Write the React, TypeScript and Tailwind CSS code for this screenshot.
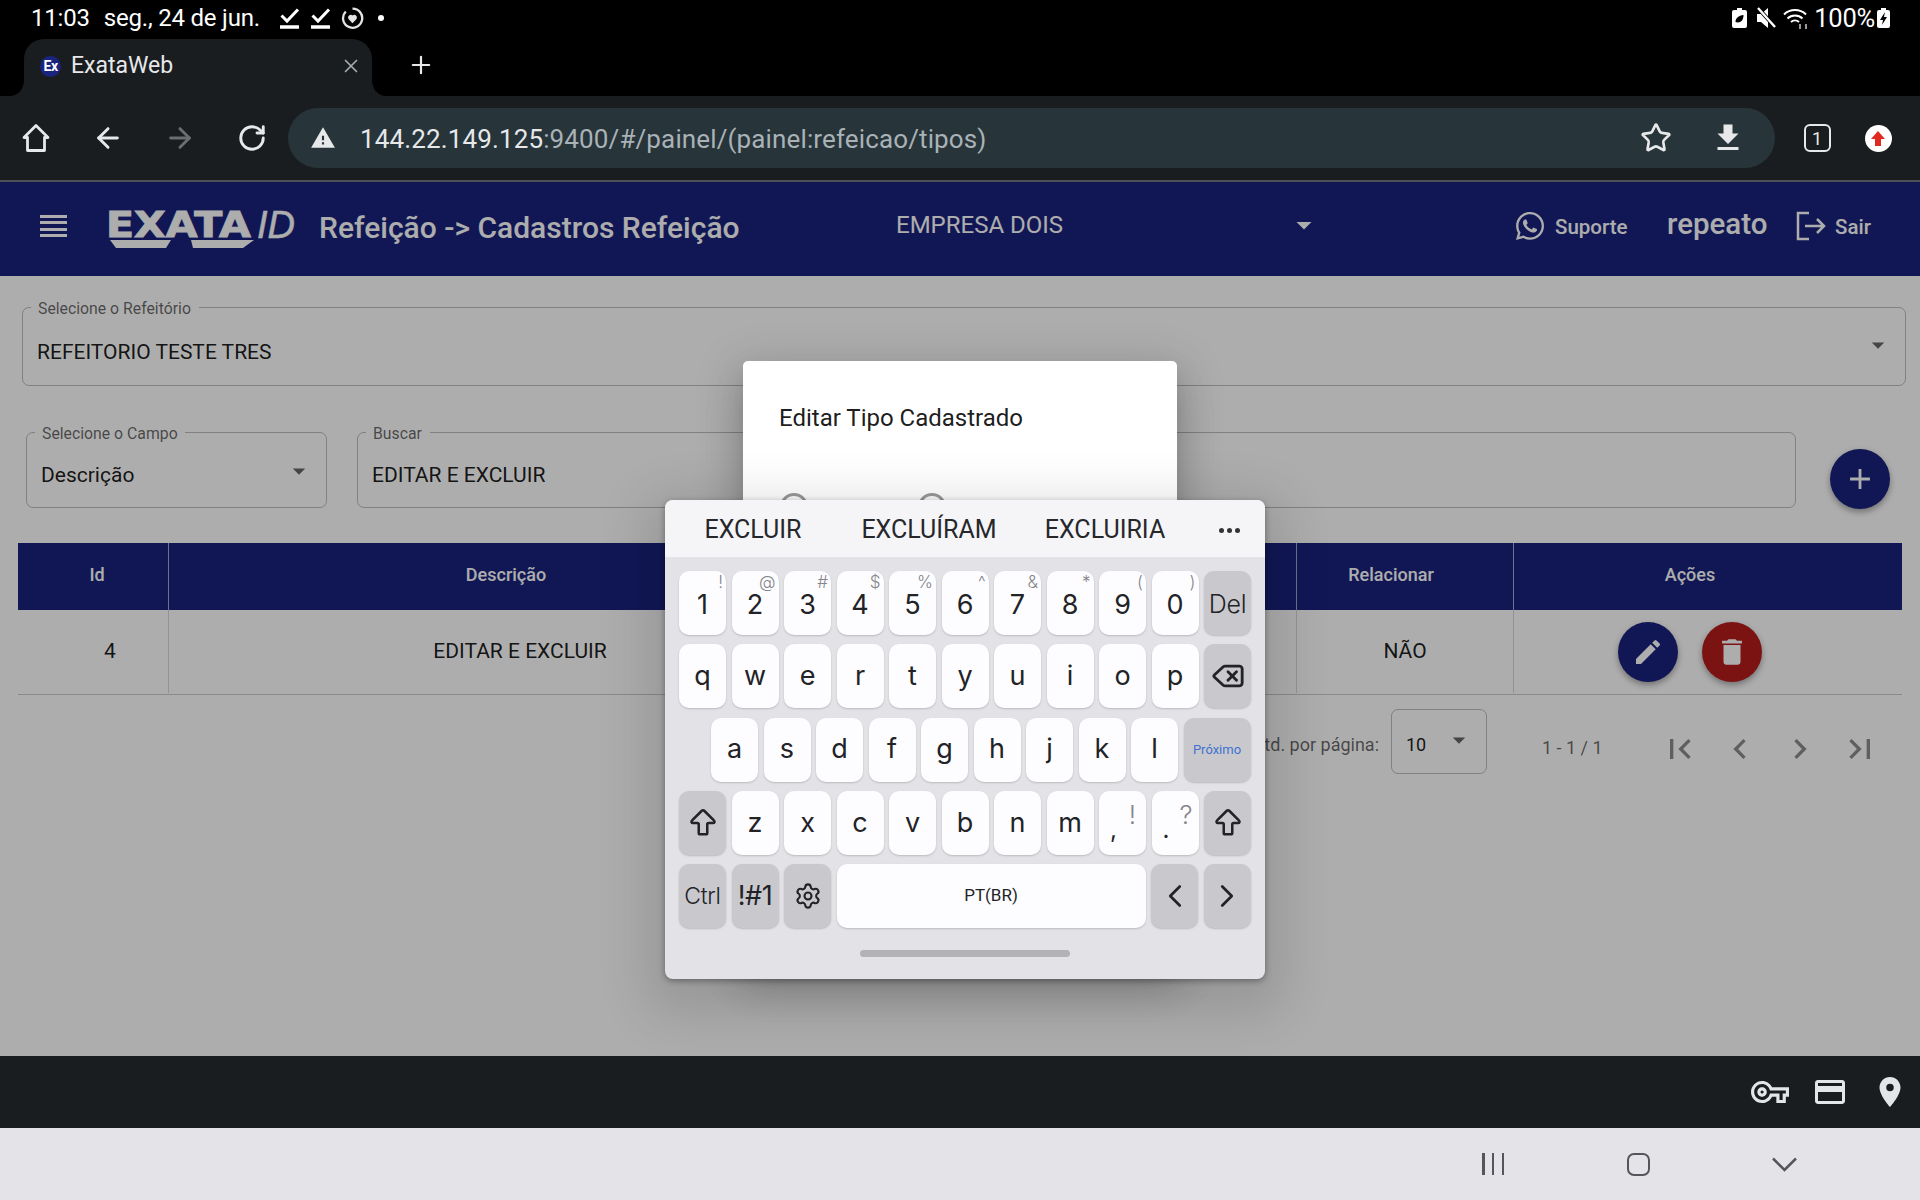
import { ArrowBigUp, ArrowLeft, ArrowRight, ChevronLeft, ChevronRight, Delete, RotateCw, Settings, Star, X, Plus } from "lucide-react";
import { FaWhatsapp } from "react-icons/fa";
import {
  MdAdd,
  MdArrowDropDown,
  MdChevronLeft,
  MdChevronRight,
  MdCreditCard,
  MdDelete,
  MdEdit,
  MdFileDownload,
  MdFirstPage,
  MdLastPage,
  MdLocationOn,
  MdOutlineVpnKey,
  MdWarning,
} from "react-icons/md";

const CheckNotif = () => (
  <svg width="22" height="24" viewBox="0 0 22 24" fill="none" stroke="#fff">
    <path d="M2.5 9.5 8 15 19 3.5" strokeWidth="3" />
    <path d="M1 21h19" strokeWidth="3.5" />
  </svg>
);

const StatusBar = () => (
  <div className="h-[39px] flex items-center pl-[31px] pr-[30px] pb-[3px] text-white text-[24px] tracking-[-0.2px]">
    <span>11:03</span>
    <span className="ml-[14px]">seg., 24 de jun.</span>
    <div className="ml-[19px] flex items-center gap-[9px]">
      <CheckNotif />
      <CheckNotif />
      <svg width="23" height="24" viewBox="0 0 24 24" fill="none" stroke="#e5e5e5">
        <path d="M12 2.2a10 10 0 1 1-7 3" strokeWidth="2.4" />
        <path d="M12 17.5 7.8 13a2.8 2.8 0 0 1 4.2-3.6A2.8 2.8 0 0 1 16.2 13Z" fill="#e5e5e5" stroke="none" />
      </svg>
      <div className="w-[6px] h-[6px] rounded-full bg-white ml-[5px]" />
    </div>
    <div className="ml-auto flex items-center">
      <svg width="15" height="20" viewBox="0 0 15 20">
        <path d="M5 0h5v2h3a2 2 0 0 1 2 2v14a2 2 0 0 1-2 2H2a2 2 0 0 1-2-2V4a2 2 0 0 1 2-2h3Z" fill="#fff" />
        <path d="M3.5 14c0-4 3-6.500 8-7 0 4.500-2 7.500-6 7.500Z" fill="#000" />
      </svg>
      <svg className="ml-[8px]" width="22" height="24" viewBox="0 0 22 24">
        <path d="M2 8h4l7-6v20l-7-6H2Z" fill="#fff" />
        <path d="M3 2 20 21" stroke="#000" strokeWidth="4" />
        <path d="M3 2 20 21" stroke="#fff" strokeWidth="2.400" />
      </svg>
      <svg className="ml-[6px]" width="26" height="24" viewBox="0 0 26 24" fill="none" stroke="#fff" strokeWidth="2">
        <path d="M1 8.500a16 16 0 0 1 22 0M4.500 12.500a11 11 0 0 1 15 0M8 16a6 6 0 0 1 8 0" />
        <path d="M17 23v-5M23 18v5" stroke="#999" />
      </svg>
      <span className="ml-[5px] text-[25.500px]">100%</span>
      <svg className="ml-[2px]" width="13" height="20" viewBox="0 0 13 20">
        <path d="M4 0h5v2h2a2 2 0 0 1 2 2v14a2 2 0 0 1-2 2H2a2 2 0 0 1-2-2V4a2 2 0 0 1 2-2h2Z" fill="#fff" />
        <path d="M8 4 3 12h3l-1 5 5-8H7Z" fill="#000" />
      </svg>
    </div>
  </div>
);

const TabStrip = () => (
  <div className="h-[57px] flex items-end">
    <div className="relative ml-[24px] w-[348px] h-[57px] bg-[#191d20] rounded-t-[20px] flex items-center pb-[3px]">
      <svg className="absolute left-[-14px] bottom-0" width="14" height="16" viewBox="0 0 14 16">
        <path d="M14 0v16H0C8 16 14 9 14 0Z" fill="#191d20" />
      </svg>
      <svg className="absolute right-[-14px] bottom-0" width="14" height="16" viewBox="0 0 14 16">
        <path d="M0 0v16h14C6 16 0 9 0 0Z" fill="#191d20" />
      </svg>
      <div className="ml-[16px] w-[21px] h-[21px] rounded-full bg-[#1a237e] flex items-center justify-center text-white text-[14px] font-bold tracking-[-0.5px]">
        Ex
      </div>
      <span className="ml-[10px] text-[23px] text-[#e6e8ea]">ExataWeb</span>
      <X className="ml-auto mr-[10px] text-[#a7acaf]" size={22} strokeWidth={1.8} />
    </div>
    <Plus className="ml-[35px] mb-[17px] text-[#e6e8ea]" size={28} strokeWidth={1.9} />
  </div>
);

const ToolbarButton = ({ children, className }: { children: React.ReactNode; className: string }) => (
  <div className={`h-full shrink-0 flex items-center justify-center ${className}`}>{children}</div>
);

const Toolbar = () => (
  <div className="h-[86px] shrink-0 bg-[#191d20] border-b-2 border-b-[#4e5257] flex items-center text-[#e6e8ea]">
    <ToolbarButton className="w-[72px]">
      <svg width="28" height="30" viewBox="0 0 28 30" fill="none" stroke="#e6e8ea" strokeWidth="2.800" strokeLinejoin="round">
        <path d="M14 2.500 2 14.500h3.500V27.500h17V14.500H26Z" />
      </svg>
    </ToolbarButton>
    <ToolbarButton className="w-[72px]">
      <ArrowLeft size={32} strokeWidth={2.2} />
    </ToolbarButton>
    <ToolbarButton className="w-[72px]">
      <ArrowRight className="text-[#6a6e71]" size={32} strokeWidth={2.2} />
    </ToolbarButton>
    <ToolbarButton className="w-[72px]">
      <RotateCw size={30} strokeWidth={2.3} />
    </ToolbarButton>
    <div className="w-[1487px] h-[60px] shrink-0 rounded-full bg-[#27343a] flex items-center pl-[22px] pr-[29px]">
      <MdWarning size={26} />
      <span className="ml-[24px] pt-[2px] text-[26px] whitespace-nowrap tracking-[0.13px]">
        144.22.149.125<span className="text-[#a9b2b6]">:9400/#/painel/(painel:refeicao/tipos)</span>
      </span>
      <Star className="ml-auto" size={32} strokeWidth={2} />
      <MdFileDownload className="ml-[38px]" size={36} />
    </div>
    <ToolbarButton className="w-[84px]">
      <div className="w-[27px] h-[28px] border-[2.5px] border-[#e6e8ea] rounded-[6px] flex items-center justify-center text-[18px]">1</div>
    </ToolbarButton>
    <ToolbarButton className="w-[38px]">
      <div className="w-[27px] h-[27px] rounded-full bg-white flex items-center justify-center">
        <svg width="14" height="15" viewBox="0 0 14 15">
          <path d="M7 0 14 8H10V15H4V8H0Z" fill="#e02a1f" />
        </svg>
      </div>
    </ToolbarButton>
  </div>
);

const AppHeader = () => (
  <div className="h-[94px] shrink-0 bg-[#1a237e] text-white flex items-center pb-[6px]">
    <div className="ml-[40px] w-[27px] shrink-0 flex flex-col gap-[3.600px]">
      <div className="h-[3px] bg-white" />
      <div className="h-[3px] bg-white" />
      <div className="h-[3px] bg-white" />
      <div className="h-[3px] bg-white" />
    </div>
    <div className="relative ml-[38px] w-[190px] shrink-0 h-[46px] pt-[3px] pl-[1px] flex items-start leading-none">
      <span className="w-[150px] shrink-0 origin-left scale-x-[1.14] font-['DejaVu_Sans'] font-bold text-[36px] leading-[38px] [-webkit-text-stroke:1px_white]">EXATA</span>
      <span className="font-['Liberation_Sans'] italic text-[38px] leading-[38px] ml-[1px] [-webkit-text-stroke:0.5px_white]">ID</span>
      <svg className="absolute left-[3px] top-[36px]" width="150" height="10" viewBox="0 0 150 10">
        <path d="M2 1H63L58 9H8ZM85 9 83 1H146L135 9Z" fill="#fff" />
      </svg>
    </div>
    <div className="ml-[24px] w-[420px] shrink-0 pt-[2px] text-[30px] font-medium whitespace-nowrap">Refeição -&gt; Cadastros Refeição</div>
    <div className="ml-[157px] w-[426px] shrink-0 flex items-center text-[24px] pb-[2px]">
      <span>EMPRESA DOIS</span>
      <MdArrowDropDown className="ml-auto" size={36} />
    </div>
    <FaWhatsapp className="ml-[192px] shrink-0" size={32} />
    <span className="ml-[9px] w-[112px] shrink-0 pt-[2px] text-[20.500px] font-medium">Suporte</span>
    <span className="w-[129px] shrink-0 text-[29.500px] font-medium pb-[4px]">repeato</span>
    <svg className="shrink-0" width="30" height="30" viewBox="0 0 30 30" fill="none" stroke="#fff" strokeWidth="2.500">
      <path d="M13 2H2V28H13" />
      <path d="M9 15H28M21 8l7 7-7 7" />
    </svg>
    <span className="ml-[9px] pt-[2px] text-[20.500px] font-medium">Sair</span>
  </div>
);

const Outlined = ({ label, labelWidth, className, children }: { label: string; labelWidth: string; className: string; children: React.ReactNode }) => (
  <div className={`relative rounded-[7px] border border-black/25 flex items-center justify-between pl-[14px] pr-[12px] pt-[12px] text-[21px] text-black/90 ${className}`}>
    <span className={`absolute left-[8px] top-[-2px] h-[4px] bg-white ${labelWidth}`} />
    <span className="absolute left-[15px] top-[-9px] text-[15.800px] leading-[20px] text-black/60 whitespace-nowrap">{label}</span>
    {children}
  </div>
);

const Content = () => (
  <div className="flex-1 bg-white flex flex-col">
    <Outlined label="Selecione o Refeitório" labelWidth="w-[168px]" className="mt-[31px] ml-[22px] mr-[14px] h-[79px]">
      <span>REFEITORIO TESTE TRES</span>
      <MdArrowDropDown className="text-black/60 mb-[15px]" size={30} />
    </Outlined>
    <div className="mt-[46px] pl-[26px] pr-[30px] flex items-start">
      <Outlined label="Selecione o Campo" labelWidth="w-[150px]" className="w-[301px] h-[76px] shrink-0">
        <span>Descrição</span>
        <MdArrowDropDown className="text-black/60 mb-[10px]" size={30} />
      </Outlined>
      <Outlined label="Buscar" labelWidth="w-[64px]" className="ml-[30px] flex-1 h-[76px]">
        <span>EDITAR E EXCLUIR</span>
      </Outlined>
      <button className="ml-[34px] mt-[17px] w-[60px] h-[60px] shrink-0 rounded-full bg-[#1a237e] text-white flex items-center justify-center shadow-[0_3px_6px_rgba(0,0,0,0.35)]">
        <MdAdd size={34} />
      </button>
    </div>
    <div className="mt-[34px] ml-[18px] mr-[18px]">
      <div className="h-[67px] grid grid-cols-[151px_674px_454px_217px_388px] bg-[#1a237e] text-[18px] font-medium text-white">
        <div className="flex items-center justify-center pl-[8px] pb-[4px] border-r border-r-white/60">Id</div>
        <div className="flex items-center justify-center pb-[4px]">Descrição</div>
        <div className="border-r border-r-white/60" />
        <div className="flex items-center justify-center pr-[28px] pb-[4px] border-r border-r-white/60">Relacionar</div>
        <div className="flex items-center justify-center pr-[36px] pb-[4px]">Ações</div>
      </div>
      <div className="h-[85px] grid grid-cols-[151px_674px_454px_217px_388px] border-b border-b-black/20 text-[21px] text-black/90">
        <div className="mb-[1px] flex items-center justify-center pl-[34px] border-r border-r-black/15">4</div>
        <div className="mb-[1px] flex items-center justify-center pl-[28px]">EDITAR E EXCLUIR</div>
        <div className="mb-[1px] border-r border-r-black/15" />
        <div className="mb-[1px] flex items-center justify-center border-r border-r-black/15">NÃO</div>
        <div className="flex items-center justify-center gap-[24px] pr-[36px] pb-[1px]">
          <button className="w-[60px] h-[60px] rounded-full bg-[#1a237e] text-white flex items-center justify-center shadow-[0_3px_6px_rgba(0,0,0,0.35)]">
            <MdEdit size={32} />
          </button>
          <button className="w-[60px] h-[60px] rounded-full bg-[#b71c1c] text-white flex items-center justify-center shadow-[0_3px_6px_rgba(0,0,0,0.35)]">
            <MdDelete size={34} />
          </button>
        </div>
      </div>
    </div>
    <div className="mt-[14px] pr-[30px] flex justify-end items-center text-black/60">
      <span className="pt-[6px] text-[18px] whitespace-nowrap">Qtd. por página:</span>
      <div className="ml-[12px] w-[96px] h-[65px] rounded-[7px] border border-black/25 flex items-center pl-[14px] pr-[12px] pt-[6px] text-[18px] text-black/90">
        <span>10</span>
        <MdArrowDropDown className="ml-auto mb-[10px] text-black/60" size={30} />
      </div>
      <span className="ml-[55px] w-[59px] text-[18px] whitespace-nowrap pt-[12px]">1 - 1 / 1</span>
      <div className="ml-[49px] flex items-center pt-[15px] text-black/45">
        <div className="w-[60px] flex justify-center">
          <MdFirstPage size={40} />
        </div>
        <div className="w-[60px] flex justify-center">
          <MdChevronLeft size={40} />
        </div>
        <div className="w-[60px] flex justify-center">
          <MdChevronRight size={40} />
        </div>
        <div className="w-[60px] flex justify-center">
          <MdLastPage size={40} />
        </div>
      </div>
    </div>
  </div>
);

const EditDialog = () => (
  <div className="absolute left-[743px] top-[179px] w-[434px] h-[600px] bg-white rounded-[5px] shadow-[0_11px_15px_-7px_rgba(0,0,0,0.2),0_24px_38px_3px_rgba(0,0,0,0.14),0_9px_46px_8px_rgba(0,0,0,0.12)]">
    <h2 className="mt-[42px] ml-[36px] text-[24px] leading-[30px] text-black/90">Editar Tipo Cadastrado</h2>
    <div className="mt-[60px] ml-[37px] flex items-center">
      <div className="w-[28px] h-[28px] rounded-full border-[3px] border-black/40" />
      <div className="ml-[110px] w-[28px] h-[28px] rounded-full border-[3px] border-black/40" />
    </div>
  </div>
);

type KeyProps = {
  label?: React.ReactNode;
  sup?: string;
  fn?: boolean;
  className?: string;
  supClassName?: string;
};

const Key = ({ label, sup, fn, className = "w-[47px] text-[27px]", supClassName = "top-[3px] right-[3px] text-[17px]" }: KeyProps) => (
  <div
    className={`relative h-[64px] shrink-0 rounded-[10px] flex items-center justify-center font-[Inter,sans-serif] text-[#222327] shadow-[0_1px_2px_rgba(0,0,0,0.18)] ${
      fn ? "bg-[#c9c9cd]" : "bg-[#fdfdff]"
    } ${className}`}
  >
    {label}
    {sup && <span className={`absolute leading-none font-light text-[#85858a] ${supClassName}`}>{sup}</span>}
  </div>
);

const NUMBERS = [
  ["1", "!"],
  ["2", "@"],
  ["3", "#"],
  ["4", "$"],
  ["5", "%"],
  ["6", "^"],
  ["7", "&"],
  ["8", "*"],
  ["9", "("],
  ["0", ")"],
];

const Keyboard = () => (
  <div className="absolute left-[665px] top-[500px] w-[600px] h-[479px] rounded-[8px] overflow-hidden bg-[#e3e3e7] shadow-[0_2px_6px_rgba(0,0,0,0.35),0_16px_50px_20px_rgba(0,0,0,0.12)]">
    <div className="h-[57px] bg-[#f5f5f8] grid grid-cols-[176px_176px_176px_72px] items-center text-[25px] text-[#26272b] pt-[3px]">
      <span className="text-center">EXCLUIR</span>
      <span className="text-center">EXCLUÍRAM</span>
      <span className="text-center">EXCLUIRIA</span>
      <div className="flex justify-center gap-[3px]">
        <div className="w-[5px] h-[5px] rounded-full bg-[#333]" />
        <div className="w-[5px] h-[5px] rounded-full bg-[#333]" />
        <div className="w-[5px] h-[5px] rounded-full bg-[#333]" />
      </div>
    </div>
    <div className="pt-[14px] pl-[14px] flex flex-col gap-[9.300px]">
      <div className="flex gap-[5.500px]">
        {NUMBERS.map(([n, s]) => (
          <Key key={n} label={<span className="mt-[4px]">{n}</span>} sup={s} />
        ))}
        <Key fn label={<span className="mt-[3px]">Del</span>} className="w-[47px] text-[25px] font-light tracking-[-0.3px]" />
      </div>
      <div className="flex gap-[5.500px]">
        {"qwertyuiop".split("").map((c) => (
          <Key key={c} label={c} />
        ))}
        <Key fn label={<Delete size={34} strokeWidth={2} fill="none" />} />
      </div>
      <div className="flex gap-[5.500px] pl-[32px]">
        {"asdfghjkl".split("").map((c) => (
          <Key key={c} label={c} />
        ))}
        <Key fn label="Próximo" className="w-[67px] text-[13px] font-[Roboto,sans-serif] !text-[#3f71cf]" />
      </div>
      <div className="flex gap-[5.500px]">
        <Key fn label={<ArrowBigUp size={34} strokeWidth={1.8} />} />
        {"zxcvbnm".split("").map((c) => (
          <Key key={c} label={c} />
        ))}
        <Key label={<span className="mt-[14px] mr-[18px]">,</span>} sup="!" supClassName="top-[11px] right-[10px] text-[26px]" className="w-[47px] text-[24px]" />
        <Key label={<span className="mt-[14px] mr-[18px]">.</span>} sup="?" supClassName="top-[11px] right-[6px] text-[26px]" className="w-[47px] text-[24px]" />
        <Key fn label={<ArrowBigUp size={34} strokeWidth={1.8} />} />
      </div>
      <div className="flex gap-[5.500px]">
        <Key fn label="Ctrl" className="w-[47px] text-[23px] font-light tracking-[-0.3px]" />
        <Key fn label="!#1" className="w-[47px] text-[27px] tracking-[-0.5px]" />
        <Key fn label={<Settings size={28} strokeWidth={1.8} />} />
        <Key label="PT(BR)" className="w-[309px] text-[17px] font-[Roboto,sans-serif]" />
        <Key fn label={<ChevronLeft size={38} strokeWidth={1.7} />} />
        <Key fn label={<ChevronRight size={38} strokeWidth={1.7} />} />
      </div>
    </div>
    <div className="mt-[22px] mx-auto w-[210px] h-[7px] rounded-full bg-[#b2b2b7]" />
  </div>
);

const FooterBars = () => (
  <>
    <div className="h-[72px] shrink-0 bg-[#191d20] flex items-center justify-end text-[#e3e6e8] pr-[12px]">
      <MdOutlineVpnKey size={38} />
      <MdCreditCard className="ml-[23px]" size={36} />
      <MdLocationOn className="ml-[24px]" size={36} />
    </div>
    <div className="h-[72px] shrink-0 bg-[#e3e3e8] flex items-center text-[#55565b]">
      <div className="ml-[1482px] w-[22px] h-[22px] flex justify-between">
        <div className="w-[2.500px] bg-[#55565b]" />
        <div className="w-[2.500px] bg-[#55565b]" />
        <div className="w-[2.500px] bg-[#55565b]" />
      </div>
      <div className="ml-[123px] w-[23px] h-[23px] rounded-[7px] border-[2.500px] border-[#55565b]" />
      <svg className="ml-[122px]" width="25" height="15" viewBox="0 0 25 15" fill="none" stroke="#55565b" strokeWidth="2.500">
        <path d="M1 1.500 12.500 13 24 1.500" />
      </svg>
    </div>
  </>
);

export default function App() {
  return (
    <div className="relative w-[1920px] h-[1200px] overflow-hidden bg-black flex flex-col font-[Roboto,sans-serif]">
      <StatusBar />
      <TabStrip />
      <Toolbar />
      <div className="relative flex-1 flex flex-col overflow-hidden">
        <AppHeader />
        <Content />
        <div className="absolute inset-0 bg-black/32" />
        <EditDialog />
      </div>
      <FooterBars />
      <Keyboard />
    </div>
  );
}
